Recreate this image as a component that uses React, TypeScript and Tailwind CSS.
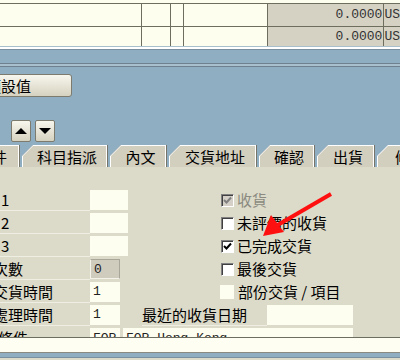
import React from "react";

const cjk = "font-['Noto_Sans_CJK_TC','Noto_Sans',sans-serif]";

const Tab = ({ label, className }: { label: string; className: string }) => (
  <div className={`relative h-[22px] shrink-0 ${className}`}>
    <div className="absolute inset-0 bg-[#77756a] [clip-path:polygon(0_11px,11px_0,100%_0,100%_100%,0_100%)]" />
    <div className="absolute bottom-0 left-0 right-[1px] top-0 bg-white [clip-path:polygon(0_11px,11px_0,100%_0,100%_100%,0_100%)]" />
    <div className="absolute bottom-0 left-[1px] right-[2px] top-[1px] bg-[#d3cfbf] [clip-path:polygon(0_10px,10px_0,100%_0,100%_100%,0_100%)]" />
    <span className="relative block pl-[4px] text-center text-[15px] leading-[23px] text-black">
      {label}
    </span>
  </div>
);

const Check = ({ checked, disabled }: { checked?: boolean; disabled?: boolean }) => (
  <span
    className={`flex h-[13px] w-[13px] shrink-0 items-center justify-center border border-b-white border-l-[#808080] border-r-white border-t-[#808080] shadow-[inset_1px_1px_0_#404040] ${
      disabled ? "bg-[#d4d0c8]" : "bg-white"
    }`}
  >
    {checked && (
      <svg width="9" height="9" viewBox="0 0 9 9">
        <path
          d="M1 4 L3.5 6.5 L8 1.5"
          fill="none"
          stroke={disabled ? "#808080" : "#000"}
          strokeWidth="2"
        />
      </svg>
    )}
  </span>
);

const Label = ({ text, shift }: { text: string; shift: string }) => (
  <div className="h-[21px] w-[90px] shrink-0 overflow-hidden border-b border-[#efeee2]">
    <span className={`block whitespace-nowrap text-[15px] leading-[20px] text-black ${shift}`}>
      {text}
    </span>
  </div>
);

const Field = ({ value, className }: { value?: string; className: string }) => (
  <div
    className={`h-[20px] shrink-0 pl-[3px] font-['Liberation_Mono',monospace] text-[13px] leading-[20px] text-[#222] ${className}`}
  >
    {value}
  </div>
);

const CheckRow = ({
  label,
  checked,
  disabled,
  className,
}: {
  label: string;
  checked?: boolean;
  disabled?: boolean;
  className: string;
}) => (
  <div className={`flex h-[20px] items-center gap-[3px] ${className}`}>
    <Check checked={checked} disabled={disabled} />
    <span className={`text-[15px] leading-[20px] ${disabled ? "text-[#8a8a80]" : "text-black"}`}>
      {label}
    </span>
  </div>
);

export default function App() {
  return (
    <div className={`relative h-[360px] w-[400px] overflow-hidden bg-[#90aec1] ${cjk}`}>
      {/* table */}
      <div className="h-[46px] bg-[#fefeee] pt-[3px]">
        <div className="flex h-[24px] border-b border-t border-[#6e6e5e]">
          <div className="w-[143px] border-r border-[#6e6e5e]" />
          <div className="w-[29px] border-r border-[#6e6e5e]" />
          <div className="w-[13px] border-r border-[#6e6e5e]" />
          <div className="w-[85px] border-r border-[#6e6e5e]" />
          <div className="w-[117px] border-r border-[#6e6e5e] bg-[#d5d2c4] pr-[1px] text-right font-['Liberation_Mono',monospace] text-[13px] leading-[22px] text-[#333]">
            0.0000
          </div>
          <div className="flex-1 bg-[#d5d2c4] font-['Liberation_Mono',monospace] text-[13px] leading-[22px] text-[#333]">
            US
          </div>
        </div>
        <div className="flex h-[19px]">
          <div className="w-[143px] border-r border-[#6e6e5e]" />
          <div className="w-[29px] border-r border-[#6e6e5e]" />
          <div className="w-[13px] border-r border-[#6e6e5e]" />
          <div className="w-[85px] border-r border-[#6e6e5e]" />
          <div className="w-[117px] border-r border-[#6e6e5e] bg-[#d5d2c4] pr-[1px] text-right font-['Liberation_Mono',monospace] text-[13px] leading-[20px] text-[#333]">
            0.0000
          </div>
          <div className="flex-1 bg-[#d5d2c4] font-['Liberation_Mono',monospace] text-[13px] leading-[20px] text-[#333]">
            US
          </div>
        </div>
      </div>
      <div className="h-[1px] bg-[#a9bfcc]" />
      <div className="h-[2px] bg-white" />
      <div className="h-[1px] bg-[#7890a0]" />

      {/* frame lines */}
      <div className="mt-[13px] h-[1px] bg-[#6f8090]" />
      <div className="h-[2px] bg-[#a8bfcd]" />
      <div className="h-[1px] bg-[#6f8090]" />

      {/* default button */}
      <div className="mt-[7px] flex">
        <button className="ml-[-20px] h-[23px] w-[92px] rounded-[3px] border border-[#7d7b6e] bg-gradient-to-b from-[#f8f7ee] to-[#d6d2c0] pl-[5px] text-left text-[15px] leading-[20px] text-black">
          預設值
        </button>
      </div>

      {/* up/down */}
      <div className="mt-[23px] ml-[11px] flex gap-[4px]">
        <button className="flex h-[22px] w-[20px] items-center justify-center rounded-[2px] border border-[#7d7b6e] bg-gradient-to-b from-[#f8f7ee] to-[#d6d2c0]">
          <span className="h-0 w-0 border-x-[6px] border-b-[6px] border-x-transparent border-b-black" />
        </button>
        <button className="flex h-[22px] w-[20px] items-center justify-center rounded-[2px] border border-[#7d7b6e] bg-gradient-to-b from-[#f8f7ee] to-[#d6d2c0]">
          <span className="h-0 w-0 border-x-[6px] border-t-[6px] border-x-transparent border-t-black" />
        </button>
      </div>

      {/* tabs */}
      <div className="mt-[3px] flex gap-[2px]">
        <Tab label="條件" className="ml-[-40px] w-[60px]" />
        <Tab label="科目指派" className="w-[86px]" />
        <Tab label="內文" className="w-[57px]" />
        <Tab label="交貨地址" className="w-[88px]" />
        <Tab label="確認" className="w-[56px]" />
        <Tab label="出貨" className="w-[58px]" />
        <div className="relative h-[22px] w-[60px] shrink-0">
          <div className="absolute inset-0 bg-white [clip-path:polygon(0_11px,11px_0,100%_0,100%_100%,0_100%)]" />
          <div className="absolute bottom-0 left-[1px] right-0 top-[1px] bg-[#d3cfbf] [clip-path:polygon(0_10px,10px_0,100%_0,100%_100%,0_100%)]" />
          <span className="relative block pl-[18px] text-[15px] leading-[23px] text-black">候</span>
        </div>
      </div>

      {/* panel */}
      <div className="h-[170px] overflow-hidden bg-[#dcdac8] pt-[23px]">
        <div className="flex h-[23px]">
          <Label text="1" shift="ml-[1px]" />
          <Field className="w-[38px] bg-[#fefef0]" />
          <CheckRow label="收貨" checked disabled className="ml-[93px]" />
        </div>
        <div className="flex h-[23px]">
          <Label text="2" shift="ml-[1px]" />
          <Field className="w-[38px] bg-[#fefef0]" />
          <CheckRow label="未評價的收貨" className="ml-[93px]" />
        </div>
        <div className="flex h-[23px]">
          <Label text="3" shift="ml-[1px]" />
          <Field className="w-[38px] bg-[#fefef0]" />
          <CheckRow label="已完成交貨" checked className="ml-[93px]" />
        </div>
        <div className="flex h-[23px]">
          <Label text="次數" shift="ml-[-7px]" />
          <Field
            value="0"
            className="w-[30px] border border-b-[#f4f3ea] border-l-[#f4f3ea] border-r-[#a8a698] border-t-[#a8a698] bg-[#cfccbe] leading-[18px]"
          />
          <CheckRow label="最後交貨" className="ml-[101px]" />
        </div>
        <div className="flex h-[23px]">
          <Label text="交貨時間" shift="ml-[-7px]" />
          <Field value="1" className="w-[30px] bg-[#fefef0]" />
          <div className="ml-[100px] flex h-[20px] items-center gap-[4px]">
            <span className="h-[14px] w-[14px] bg-[#fefef0]" />
            <span className="text-[15px] leading-[20px] text-black">部份交貨 / 項目</span>
          </div>
        </div>
        <div className="flex h-[23px]">
          <Label text="處理時間" shift="ml-[-7px]" />
          <Field value="1" className="w-[30px] bg-[#fefef0]" />
          <div className="ml-[22px] h-[21px] w-[125px] border-b border-[#efeee2] text-[15px] leading-[20px] text-black">
            最近的收貨日期
          </div>
          <Field className="w-[86px] bg-[#fefef0]" />
        </div>
        <div className="flex h-[23px]">
          <Label text="條件" shift="ml-[-2px]" />
          <Field value="FOR" className="w-[30px] bg-[#fefef0] leading-[22px]" />
          <Field value="FOR Hong Kong" className="ml-[3px] w-[230px] bg-[#fefef0] leading-[22px]" />
        </div>
      </div>

      {/* bottom */}
      <div className="h-[1px] bg-[#6e6e60]" />
      <div className="h-[14px] bg-[#fefef2]" />
      <div className="h-[1px] bg-[#8a8a80]" />
      <div className="h-[4px] bg-[#90aec1]" />
      <div className="h-[1px] bg-[#7890a0]" />
      <div className="h-[3px] bg-[#dcdac8]" />

      {/* red arrow */}
      <svg className="pointer-events-none absolute left-0 top-0" width="400" height="360">
        <line x1="331" y1="194" x2="276" y2="226" stroke="#ff1010" strokeWidth="4" />
        <polygon points="263,236 271,215 284,232" fill="#ff1010" />
      </svg>
    </div>
  );
}
